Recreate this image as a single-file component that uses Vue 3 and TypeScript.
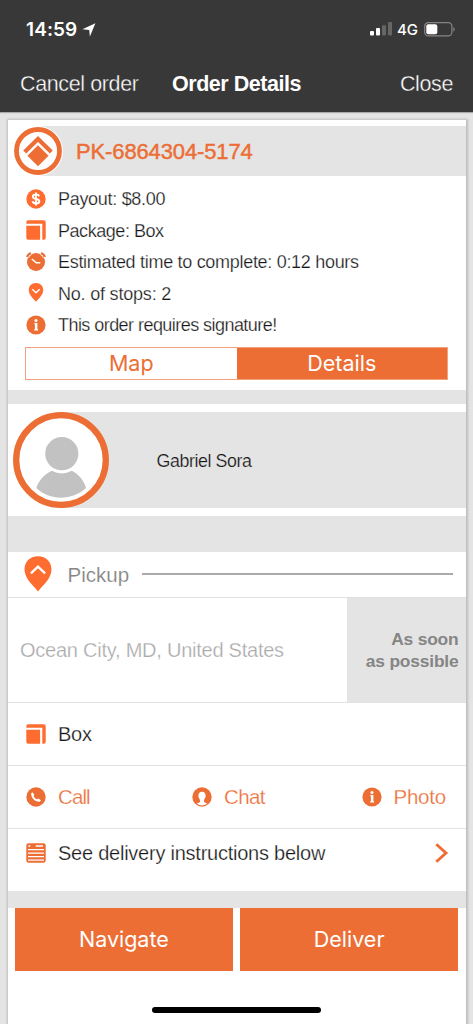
<script setup lang="ts">
import { ref } from 'vue'

type IconName = 'dollar' | 'box' | 'alarm' | 'pin' | 'info'

interface InfoRow {
  icon: IconName
  text: string
}

const rows: InfoRow[] = [
  { icon: 'dollar', text: 'Payout: $8.00' },
  { icon: 'box', text: 'Package: Box' },
  { icon: 'alarm', text: 'Estimated time to complete: 0:12 hours' },
  { icon: 'pin', text: 'No. of stops: 2' },
  { icon: 'info', text: 'This order requires signature!' },
]

const tab = ref<'map' | 'details'>('details')
</script>

<template>
  <div class="screen">
    <header class="top">
      <div class="status">
        <span class="time">14:59</span>
        <svg class="loc" width="14" height="14" viewBox="0 0 14 14"><path d="M13.4.3 7.9 13.6 7.2 7 .4 6.300Z" fill="#fff" /></svg>
        <span class="grow"></span>
        <svg width="22" height="14" viewBox="0 0 22 14">
          <rect x="0" y="9" width="4" height="4.6" rx="1" fill="#fff" />
          <rect x="6" y="6" width="4" height="7.6" rx="1" fill="#fff" />
          <rect x="12" y="3.2" width="4" height="10.4" rx="1" fill="#666" />
          <rect x="18" y="0" width="4" height="13.6" rx="1" fill="#666" />
        </svg>
        <span class="net">4G</span>
        <svg width="32" height="15" viewBox="0 0 32 15">
          <rect x=".7" y=".7" width="27.2" height="13.2" rx="3.6" fill="none" stroke="#858585" stroke-width="1.2" />
          <rect x="2.3" y="2.3" width="11" height="10" rx="2" fill="#fff" />
          <path d="M29.4 5v4.8c1.8-.8 1.8-4 0-4.8" fill="#858585" />
        </svg>
      </div>
      <nav class="nav">
        <span class="thin">Cancel order</span>
        <b>Order Details</b>
        <span class="thin close">Close</span>
      </nav>
    </header>

    <main class="card">
      <section class="title">
        <svg class="logo" width="50" height="50" viewBox="0 0 50 50">
          <circle cx="25" cy="25" r="25" fill="#fff" />
          <circle cx="25" cy="25" r="21.5" fill="#fff" stroke="#ec6e35" stroke-width="4.8" />
          <path d="M11.7 25.9 25 12.9 38.3 25.9" fill="none" stroke="#ec6e35" stroke-width="4.2" />
          <path d="M25 19.2 35.6 29.7 25 40.2 14.4 29.7Z" fill="#ec6e35" />
        </svg>
        <span class="code">PK-6864304-5174</span>
      </section>

      <ul class="info">
        <li v-for="row in rows" :key="row.text" :class="row.icon">
          <svg width="20" height="20" viewBox="0 0 20 20">
            <template v-if="row.icon === 'dollar'">
              <circle cx="10" cy="10" r="9.7" fill="#ff6c2f" />
              <path d="M13.2 7.3C12.7 5.9 11.6 5.5 10 5.5c-1.9 0-3.1.8-3.1 2.2 0 3.2 6.4 1.3 6.4 4.5 0 1.5-1.3 2.3-3.3 2.3-1.9 0-3.1-.7-3.5-2.2M10 3.6v12.8" fill="none" stroke="#fff" stroke-width="1.9" />
            </template>
            <template v-else-if="row.icon === 'box'">
              <path d="M2.2.3h15.6q1.9 0 1.9 1.9v15.6q0 1.9-1.9 1.9h-1.5V3.7H.3V2.2Q.3.3 2.2.3Z" fill="#ff6c2f" />
              <path d="M.3 5.7h13.8v14H2.2q-1.9 0-1.9-1.9Z" fill="#ff6c2f" />
            </template>
            <template v-else-if="row.icon === 'alarm'">
              <circle cx="10" cy="10" r="9" fill="#ec6e35" />
              <path d="M1 5.2C1.3 2.8 2.9 1.2 5 .9M19 5.2C18.7 2.8 17.1 1.2 15 .9" fill="none" stroke="#fff" stroke-width="4.500" />
              <path d="M1.200 5C1.700 3 3 1.700 4.900 1.200M18.800 5C18.300 3 17 1.700 15.100 1.200" fill="none" stroke="#ec6e35" stroke-width="2.300" />
              <path d="m5.8 7 4.5 3.8h4" fill="none" stroke="#fff" stroke-width="1.5" />
            </template>
            <template v-else-if="row.icon === 'pin'">
              <path d="M10 0C5.6 0 2.8 3.1 2.8 7.1c0 5 4.5 8.5 7.2 11.7 2.7-3.2 7.2-6.7 7.2-11.7C17.2 3.1 14.4 0 10 0Z" fill="#ff6c2f" />
              <path d="m6.3 6.2 3.7 3.5 3.7-3.5" fill="none" stroke="#fff" stroke-width="1.5" />
            </template>
            <template v-else>
              <circle cx="10" cy="10" r="9.6" fill="#ec6e35" />
              <circle cx="10" cy="5.5" r="1.5" fill="#fff" />
              <path d="M8.300 8.100h3.100v6.200h.7v1.200H8.200v-1.200h.7V9.300h-.6Z" fill="#fff" />
            </template>
          </svg>
          <span>{{ row.text }}</span>
        </li>
      </ul>

      <div class="tabs">
        <button :class="{ on: tab === 'map' }" @click="tab = 'map'">Map</button>
        <button :class="{ on: tab === 'details' }" @click="tab = 'details'">Details</button>
      </div>

      <div class="gap first"></div>

      <section class="person">
        <svg class="avatar" width="96" height="96" viewBox="0 0 96 96">
          <circle cx="48" cy="48" r="44.8" fill="#fff" stroke="#ec6e35" stroke-width="6.3" />
          <circle cx="48.8" cy="41.7" r="16.6" fill="#c2c2c2" />
          <path d="M38.8 58.8q10 5.2 20 0c7.5 3.7 12 10 14.3 17.3-13.5 12.6-36.6 13-49.8 0C25.8 68.800 31 62.300 38.800 58.800Z" fill="#c2c2c2" />
        </svg>
        <span>Gabriel Sora</span>
      </section>

      <div class="gap second"></div>

      <section class="pickup">
        <svg width="28" height="36" viewBox="0 0 28 36">
          <path d="M14 .2C5.800.2.500 5.900.500 13.300.500 22.500 8.300 28.500 14 35.400 19.700 28.500 27.500 22.500 27.500 13.300 27.500 5.900 22.200.2 14 .2Z" fill="#ff6c2f" />
          <path d="m6.900 17.300 7.100-6.700 7.100 6.700" fill="none" stroke="#fff" stroke-width="2.300" />
        </svg>
        <span>Pickup</span>
        <i></i>
      </section>

      <section class="address">
        <span class="place">Ocean City, MD, United States</span>
        <b>As soon<br />as possible</b>
      </section>

      <section class="line box">
        <svg width="20" height="20" viewBox="0 0 20 20">
          <path d="M2.2.3h15.6q1.9 0 1.9 1.9v15.6q0 1.9-1.9 1.9h-1.5V3.7H.3V2.2Q.3.3 2.2.3Z" fill="#ff6c2f" />
          <path d="M.3 5.7h13.8v14H2.2q-1.9 0-1.9-1.9Z" fill="#ff6c2f" />
        </svg>
        <span>Box</span>
      </section>

      <section class="line actions">
        <div class="call">
          <svg width="20" height="20" viewBox="0 0 20 20">
            <circle cx="10" cy="10" r="9.700" fill="#ec6e35" />
            <path d="M6.500 5.300 5.200 6.300C4.600 10.800 9.500 15.400 13.800 14.700L14.900 13.300 12.400 11.600 11.100 12.300C9.500 11.700 8.100 10.300 7.600 8.900L8.300 7.700Z" fill="#fff" />
          </svg>
          <span>Call</span>
        </div>
        <div class="chat">
          <svg width="20" height="20" viewBox="0 0 20 20">
            <circle cx="10" cy="10" r="9.700" fill="#ec6e35" />
            <path d="M10 4.800C7.500 4.800 6.200 6.500 6.500 8.900 6.200 9.900 6.700 10.700 7.200 11.200L8 13.200V15L4.800 16.700Q10 20.200 15.200 16.700L12 15v-1.800l.8-2c.5-.5 1-1.300.7-2.300.3-2.400-1-4.100-3.500-4.100Z" fill="#fff" />
          </svg>
          <span>Chat</span>
        </div>
        <div>
          <svg width="20" height="20" viewBox="0 0 20 20">
            <circle cx="10" cy="10" r="9.600" fill="#ec6e35" />
            <circle cx="10" cy="5.500" r="1.500" fill="#fff" />
            <path d="M8.300 8.100h3.100v6.200h.7v1.200H8.200v-1.200h.7V9.300h-.6Z" fill="#fff" />
          </svg>
          <span>Photo</span>
        </div>
      </section>

      <section class="line instructions">
        <svg width="20" height="20" viewBox="0 0 20 20">
          <rect x=".3" y=".3" width="19.400" height="19.400" rx="2.200" fill="#ec6e35" />
          <path d="M2.500 3h1.800M9.700 3H17" stroke="#fff" stroke-width="1.400" />
          <path d="M2 6.700h16M2 10.200h16M2 13.700h16M2 17.200h16" stroke="#fff" stroke-width="1.300" />
        </svg>
        <span>See delivery instructions below</span>
        <svg class="chev" width="14" height="20" viewBox="0 0 14 20"><path d="m1.300 1.200 9.700 8.800-9.700 8.800" fill="none" stroke="#ec6e35" stroke-width="2.900" /></svg>
      </section>

      <div class="gap third"></div>

      <footer class="buttons">
        <button>Navigate</button>
        <button>Deliver</button>
      </footer>
      <div class="home"></div>
    </main>
  </div>
</template>

<style>
html, body { margin: 0; background: #e4e4e4; }
</style>

<style scoped>
* { box-sizing: border-box; }
.screen {
  width: 473px;
  height: 1024px;
  overflow: hidden;
  display: flex;
  flex-direction: column;
  background: #e4e4e4;
  font-family: "Liberation Sans", Arial, sans-serif;
  color: #161616;
}
svg { display: block; flex: none; }
span, b { white-space: nowrap; }
.top {
  height: 112px;
  flex: none;
  background: #383838;
  color: #fff;
  margin-bottom: 8px;
  box-shadow: 0 1px 1px #aaa;
}
.status {
  height: 58px;
  display: flex;
  align-items: center;
  padding: 0 17px 0 26px;
  font-family: Inter, sans-serif;
}
.time { font-size: 19px; font-weight: 600; letter-spacing: .1px; width: 52px; }
.loc { margin-left: 4px; margin-top: 2px; }
.grow { flex: 1; }
.net { font-size: 15px; font-weight: 500; width: 21px; margin: 0 6px 0 5px; }
.nav {
  height: 52px;
  display: grid;
  grid-template-columns: 152px 1fr auto;
  align-items: center;
  padding: 0 20px 0 20px;
  font-size: 21.5px;
}
.nav .thin { letter-spacing: -.38px; -webkit-text-stroke: .35px #383838; }
.nav b { letter-spacing: -.46px; }
.card {
  position: relative;
  margin: 0 7.500px 0 8px;
  height: 904px;
  flex: none;
  display: flex;
  flex-direction: column;
  background: #fff;
  box-shadow: 0 0 2px 1.500px #bdbdbd;
}
.title {
  height: 50px;
  flex: none;
  margin: 6px 0 0 30px;
  background: #e4e4e4;
  display: flex;
  align-items: center;
}
.logo { margin-left: -25px; }
.code { margin: 2px 0 0 13px; font-size: 22px; letter-spacing: -.13px; color: #ec6e35; -webkit-text-stroke: .45px #ec6e35; }
.info {
  list-style: none;
  margin: 7px 0 0 18px;
  padding: 0;
  height: 158px;
  flex: none;
  font-size: 18px;
  letter-spacing: -.3px;
}
.info li { height: 31.500px; display: flex; align-items: center; gap: 12px; -webkit-text-stroke: .25px #fff; }
.info li span { margin-top: 2px; }
.info .box { letter-spacing: -.45px; }
.info .pin { letter-spacing: -.2px; }
.info .info { all: unset; }
.info li.info { height: 31.500px; display: flex; align-items: center; gap: 12px; letter-spacing: -.55px; -webkit-text-stroke: .25px #fff; }
.tabs { display: flex; height: 33px; flex: none; margin: 6px 17.500px 0 17px; border: 1px solid #f3a17c; }
button {
  flex: 1;
  border: 0;
  padding: 0;
  margin: 0;
  background: transparent;
  color: #ec6e35;
  font: 400 21.500px Inter, sans-serif;
}
.tabs button { padding-bottom: 2px; }
.tabs button.on { background: #ec6e35; color: #fff; }
.gap { flex: none; background: #e4e4e4; }
.first { height: 14px; margin-top: 10px; }
.person {
  flex: none;
  height: 96px;
  margin: 8px 0 8px 52px;
  background: #e4e4e4;
  display: flex;
  align-items: center;
  font-size: 17.800px;
  letter-spacing: -.4px;
  -webkit-text-stroke: .2px #e4e4e4;
}
.avatar { margin-left: -47.500px; }
.person span { margin-left: 48px; margin-top: 2px; }
.second { height: 35.500px; }
.pickup {
  flex: none;
  height: 45.500px;
  display: flex;
  align-items: center;
  padding: 0 12.500px 0 15.500px;
  color: #858585;
  font-size: 20.500px;
}
.pickup span { margin-left: 16px; margin-top: 2px; -webkit-text-stroke: .15px #fff; }
.pickup i { flex: 1; height: 2px; background: #aaa; margin: -1px 0 0 13px; }
.address {
  flex: none;
  height: 105px;
  border-top: 1px solid #e0e0e0;
  display: flex;
  align-items: center;
  justify-content: space-between;
}
.place { margin-left: 12px; font-size: 20px; letter-spacing: -.24px; color: #aaa; -webkit-text-stroke: .25px #fff; }
.address b {
  width: 118.500px;
  height: 104px;
  padding: 31px 7px 0 0;
  background: #e4e4e4;
  color: #858585;
  font-size: 17.400px;
  line-height: 21.500px;
  letter-spacing: -.18px;
  text-align: right;
}
.line {
  flex: none;
  height: 63px;
  border-top: 1.500px solid #e2e2e2;
  padding: 0 18px;
  display: flex;
  align-items: center;
  font-size: 20px;
  letter-spacing: -.24px;
  -webkit-text-stroke: .25px #fff;
}
.line span { margin-left: 12px; margin-top: 1px; }
.actions { color: #ec6e35; font-size: 20.500px; }
.actions > div { display: flex; align-items: center; }
.actions span { margin-top: 0; }
.actions .call { width: 166px; letter-spacing: -.9px; }
.actions .chat { width: 169.500px; letter-spacing: -.6px; }
.instructions { height: 62.500px; padding-bottom: 14px; }
.instructions .chev { margin-left: auto; margin-right: -1px; }
.third { height: 17px; }
.buttons { flex: none; height: 63px; display: flex; gap: 7.500px; padding: 0 7.500px 0 7px; }
.buttons button { background: #ec6e35; color: #fff; }
.home { width: 169px; height: 6.500px; border-radius: 4px; background: #000; margin: 36px 0 0 144px; }
</style>
